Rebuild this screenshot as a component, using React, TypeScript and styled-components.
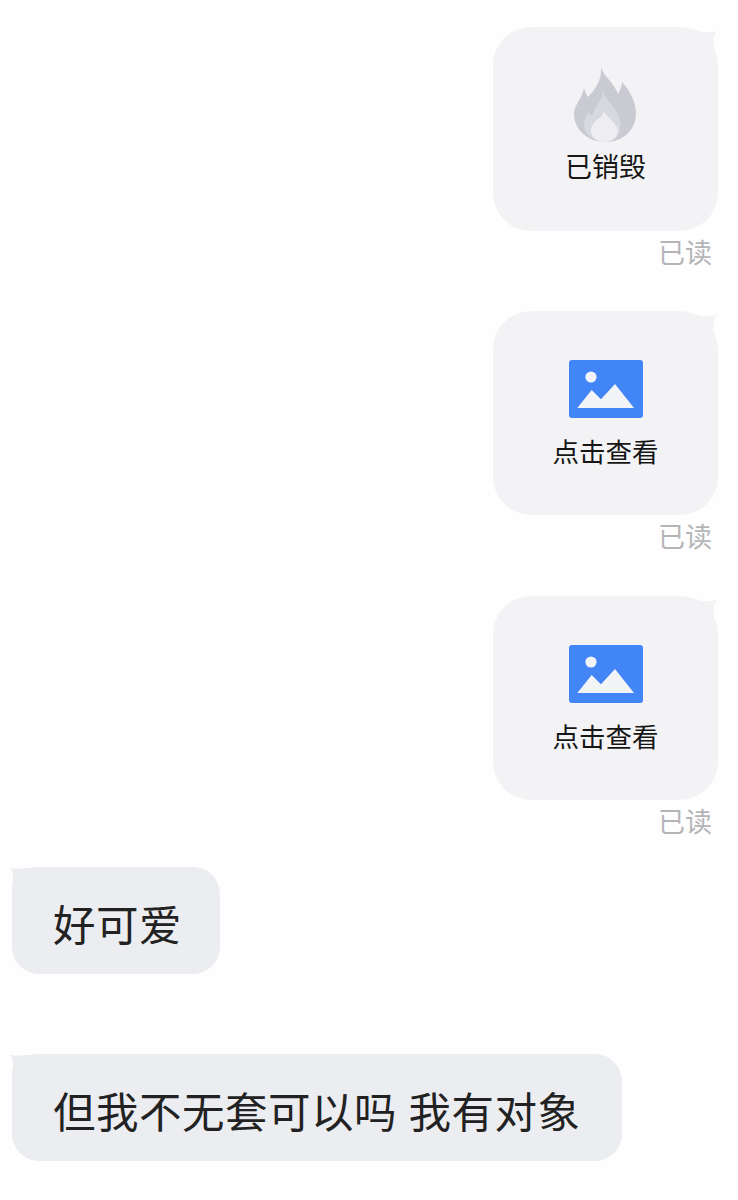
import React from 'react';
import styled, { createGlobalStyle } from 'styled-components';

const GlobalStyle = createGlobalStyle`
  html, body {
    margin: 0;
    padding: 0;
    background: #fefefe;
  }
`;

const Page = styled.div`
  width: 738px;
  height: 1200px;
  overflow: hidden;
  padding: 27px 20px 0 12px;
  box-sizing: border-box;
  display: flex;
  flex-direction: column;
  font-family: "Noto Sans CJK SC", "Liberation Sans", sans-serif;
`;

const SentList = styled.div`
  display: flex;
  flex-direction: column;
  gap: 40.3px;
`;

const SentGroup = styled.div`
  display: flex;
  flex-direction: column;
  align-items: flex-end;
`;

const SentBubble = styled.div`
  position: relative;
  width: 225px;
  height: 204px;
  box-sizing: border-box;
  background: #f3f3f5;
  border-radius: 38px;
  display: flex;
  flex-direction: column;
  align-items: center;
`;

const BubbleTail = styled.svg<{ $left?: boolean }>`
  position: absolute;
  top: 0;
  ${props => (props.$left ? 'left: -2px;' : 'right: -1px;')}
  width: 26px;
  height: 32px;
`;

const FlameIcon = styled.svg`
  width: 63px;
  height: 76px;
  margin-top: 40px;
`;

const PhotoIcon = styled.svg`
  width: 74px;
  height: 58px;
  margin-top: 49px;
`;

const BubbleLabel = styled.div<{ $photo?: boolean }>`
  font-size: ${props => (props.$photo ? '26.5px' : '27px')};
  line-height: 36px;
  color: #161616;
  margin-top: ${props => (props.$photo ? '15px' : '5px')};
`;

const ReadMark = styled.div`
  font-size: 27px;
  line-height: 36px;
  color: #b5b5b8;
  margin: 3px 6px 1px 0;
`;

const ReceivedBubble = styled.div<{ $gap: number; $width: number }>`
  position: relative;
  align-self: flex-start;
  width: ${props => props.$width}px;
  height: 107px;
  box-sizing: border-box;
  padding: 5px 0 0 41px;
  margin-top: ${props => props.$gap}px;
  background: #ecedf1;
  border-radius: 27px;
  display: flex;
  align-items: center;
  font-size: 42.5px;
  letter-spacing: 0.5px;
  word-spacing: 1.5px;
  color: #222222;
  white-space: pre;
`;

const Flame = () => (
  <FlameIcon viewBox="0 0 63 76">
    <path
      fill="#cacbd2"
      d="M27 0 C29 9 39 14 44 27 C46 23 48 19 48 15 C56 24 62 35 62 46 C62 63 49 75 32 75 C14 75 0 63 0 47 C0 38 8 32 10 21 C11 24 12 27 14 30 C21 22 28 14 27 0 Z"
    />
    <path
      fill="#d8d9de"
      d="M29 24 C31 32 40 38 45 50 C48 58 46 66 42 71 C38 74 35 75 32 75 C24 75 15 71 11 63 C9 56 11 50 14 45 C15 47 17 48 19 48 C20 40 28 34 29 24 Z"
    />
    <path
      fill="#eeeef1"
      d="M30 43 C31 49 39 53 43 60 C46 68 39 75 31 75 C23 75 16 70 17 62 C18 57 21 54 24 52 C27 50 30 47 30 43 Z"
    />
  </FlameIcon>
);

const Photo = () => (
  <PhotoIcon viewBox="0 0 74 58">
    <rect width="74" height="58" rx="3" fill="#4285f6" />
    <circle cx="22" cy="17" r="5.6" fill="#f3f4f8" />
    <path fill="#f3f4f8" d="M8.3 48 L22.7 30 L32 39.3 L46 24 L65 48 Z" />
  </PhotoIcon>
);

const TailRight = () => (
  <BubbleTail viewBox="0 0 26 32">
    <path fill="#f3f3f5" d="M0 2 C8 6 16 6 24 4 C20 9 19 15 23 30 L0 30 Z" />
  </BubbleTail>
);

const TailLeft = () => (
  <BubbleTail $left viewBox="0 0 26 32">
    <path fill="#ecedf1" d="M26 0 C18 1.5 9 2 0 1 C3 5 4 10 2 18 L2 28 L26 28 Z" />
  </BubbleTail>
);

const sentItems = [
  { kind: 'flame', label: '已销毁' },
  { kind: 'photo', label: '点击查看' },
  { kind: 'photo', label: '点击查看' },
];

const App: React.FC = () => {
  return (
    <Page>
      <GlobalStyle />
      <SentList>
        {sentItems.map((item, index) => (
          <SentGroup key={index}>
            <SentBubble>
              <TailRight />
              {item.kind === 'flame' ? <Flame /> : <Photo />}
              <BubbleLabel $photo={item.kind === 'photo'}>{item.label}</BubbleLabel>
            </SentBubble>
            <ReadMark>已读</ReadMark>
          </SentGroup>
        ))}
      </SentList>
      <ReceivedBubble $gap={27} $width={208}>
        <TailLeft />
        好可爱
      </ReceivedBubble>
      <ReceivedBubble $gap={80} $width={610}>
        <TailLeft />
        但我不无套可以吗 我有对象
      </ReceivedBubble>
    </Page>
  );
};

export default App;
